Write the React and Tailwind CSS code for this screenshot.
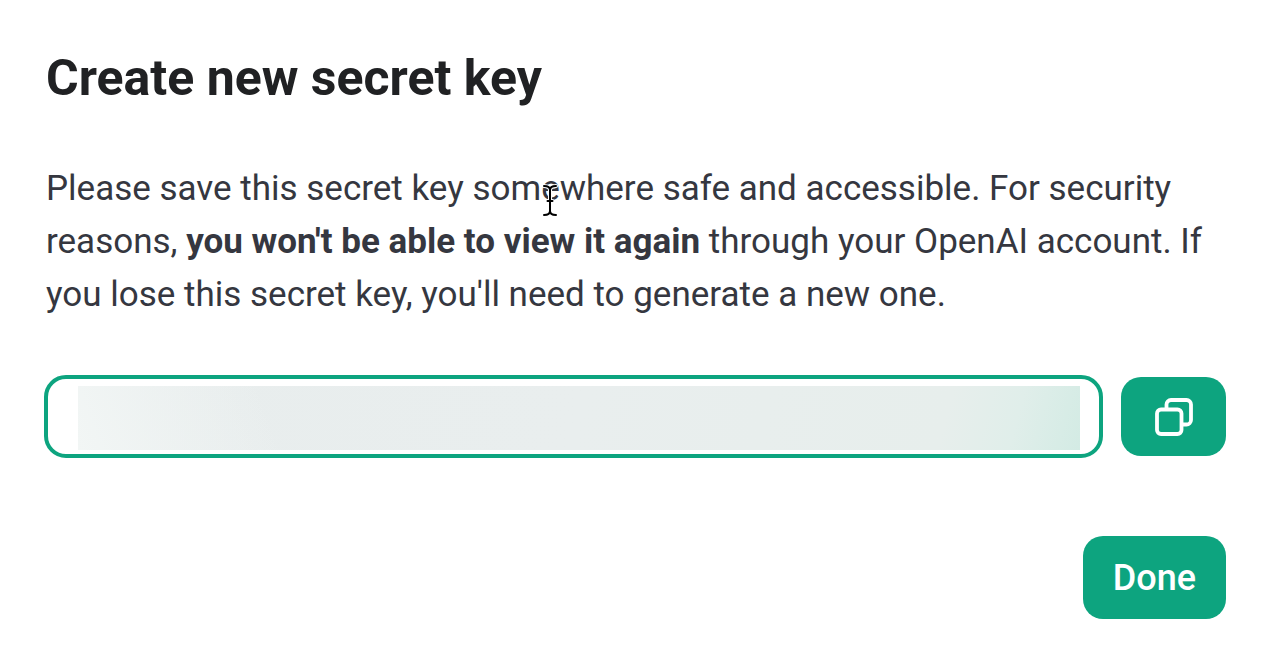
function CopyIcon() {
  return (
    <svg
      viewBox="0 0 38 38"
      className="size-[38px]"
      fill="none"
      stroke="currentColor"
      strokeWidth="3.8"
      strokeLinejoin="round"
      aria-hidden="true"
    >
      <rect x="2" y="11.5" width="24.5" height="24.5" rx="4" />
      <path d="M11.5 11.5V6.5a4.5 4.5 0 0 1 4.500-4.500H31.500a4.500 4.500 0 0 1 4.500 4.500V22a4.500 4.500 0 0 1-4.500 4.500H26.500" />
    </svg>
  );
}

function TextCursor() {
  return (
    <svg
      viewBox="0 0 16 34"
      className="pointer-events-none absolute top-4 left-1/2 h-[34px] w-4 -translate-x-1/2"
      fill="none"
      strokeLinecap="round"
      aria-hidden="true"
    >
      <g stroke="#fff" strokeWidth="4">
        <path d="M2 2C5 2 8 3 8 6C8 3 11 2 14 2M8 6V28M2 31C5 31 8 30 8 27C8 30 11 31 14 31M5.500 17H10.500" />
      </g>
      <g stroke="#000" strokeWidth="2">
        <path d="M2 2C5 2 8 3 8 6C8 3 11 2 14 2M8 6V28M2 31C5 31 8 30 8 27C8 30 11 31 14 31M5.500 17H10.500" />
      </g>
    </svg>
  );
}

export default function App() {
  return (
    <main className="bg-white pt-[48px] pr-9 pb-10 pl-[46px] font-['Roboto',sans-serif] text-[#353740]">
      <h1 className="text-[50px] leading-[60px] font-bold text-[#202123]">Create new secret key</h1>
      <p className="mt-[54px] text-[35px] leading-[53px]">
        Please save this secret key som<span className="relative">e<TextCursor /></span>where safe and
        accessible. For security reasons, <strong>you won't be able to view it again</strong> through
        your OpenAI account. If you lose this secret key, you'll need to generate a new one.
      </p>
      <div className="mt-14 flex gap-5">
        <div className="-m-0.5 min-w-0 flex-1 rounded-[22px] border-4 border-[#0da47f] pt-[7px] pr-[19px] pb-1 pl-[30px]">
          <input
            type="text"
            readOnly
            aria-label="Secret key"
            className="block h-16 w-full bg-[linear-gradient(70deg,#f2f6f5_0%,#f2f6f500_20%),linear-gradient(105deg,#e8eded_0%,#e9eeee_50%,#e7eeec_86%,#e0eeea_93%,#d3ebe4_100%)] outline-none"
          />
        </div>
        <button
          type="button"
          aria-label="Copy secret key"
          className="flex w-[105px] items-center justify-center rounded-[20px] bg-[#0da47f] text-white"
        >
          <CopyIcon />
        </button>
      </div>
      <div className="mt-20 flex justify-end">
        <button
          type="button"
          className="rounded-[20px] bg-[#0da47f] px-[30px] pt-4 pb-3.5 text-[36px] leading-[53px] font-medium text-white"
        >
          Done
        </button>
      </div>
    </main>
  );
}
